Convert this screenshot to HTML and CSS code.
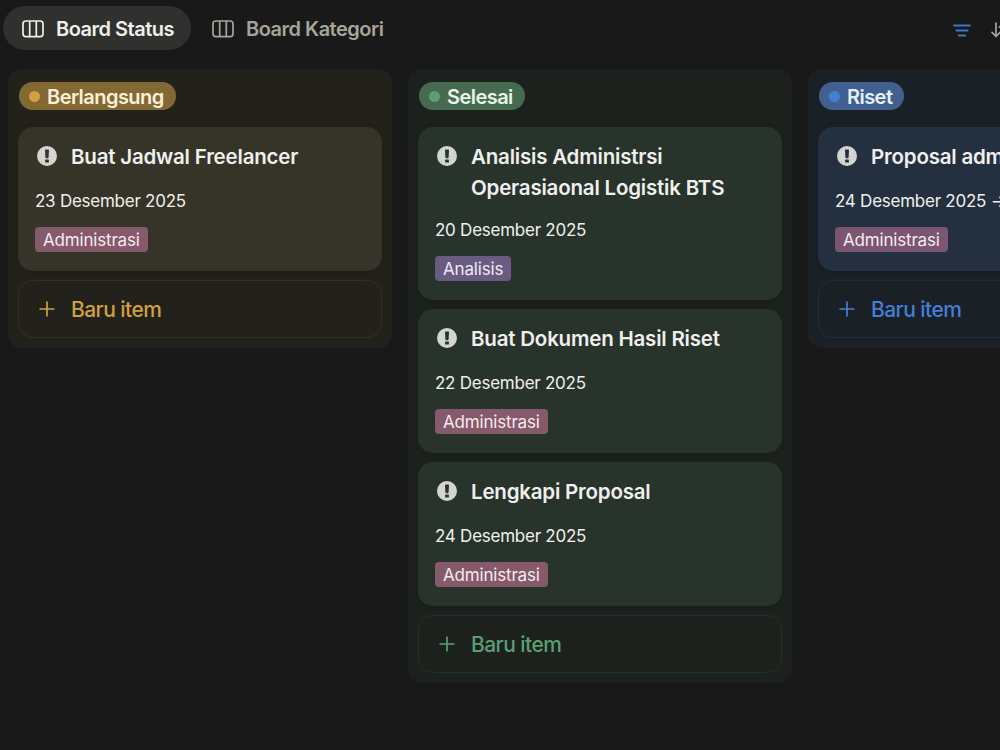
FILE: index.html
```html
<!DOCTYPE html>
<html lang="id">
<head>
  <meta charset="UTF-8">
  <meta name="viewport" content="width=device-width, initial-scale=1.0">
  <title>Board Status</title>
  <link rel="stylesheet" href="styles.css">
</head>
<body>
  <!-- Shared icons -->
  <svg class="sprite" aria-hidden="true">
    <symbol id="icon-board" viewBox="0 0 22 18">
      <rect x="1" y="1" width="20" height="15.6" rx="2.8" fill="none" stroke="currentColor" stroke-width="1.7"/>
      <path d="M7.7 1v15.6M14.3 1v15.6" fill="none" stroke="currentColor" stroke-width="1.7"/>
    </symbol>
    <symbol id="icon-alert" viewBox="0 0 20 20">
      <path fill="currentColor" fill-rule="evenodd" d="M10 0a10 10 0 1 0 0 20a10 10 0 0 0 0-20zM8.8 3.4h2.4q.9 0 .8.9l-.4 7q-.1.9-.9.9H9.300q-.8 0-.9-.9L8 4.300q-.1-.9.8-.9zM8.600 13.600h2.800q.5 0 .5.5v1.900q0 .5-.5.5h-2.800q-.5 0-.5-.5v-1.900q0-.5.5-.5z"/>
    </symbol>
    <symbol id="icon-plus" viewBox="0 0 16 16">
      <path d="M8 1.200v13.600M1.200 8h13.600" fill="none" stroke="currentColor" stroke-width="1.700" stroke-linecap="round"/>
    </symbol>
  </svg>

  <header class="topbar">
    <nav class="tabs">
      <a class="tab active"><svg class="tab-icon"><use href="#icon-board"/></svg>Board Status</a>
      <a class="tab"><svg class="tab-icon"><use href="#icon-board"/></svg>Board Kategori</a>
    </nav>
    <div class="actions">
      <svg class="filter-icon" viewBox="0 0 18 13"><path d="M1.200 1.500h15.600M3.600 6.500h10.800M6 11.500h6" fill="none" stroke="currentColor" stroke-width="2.200" stroke-linecap="round"/></svg>
      <svg class="sort-icon" viewBox="0 0 20 16"><path d="M5 1v13.500M1 10.300l4 4.200 4-4.200M13 14.500V1M8.500 5.200L13 1l4.500 4.200" fill="none" stroke="currentColor" stroke-width="1.700" stroke-linecap="round" stroke-linejoin="round"/></svg>
    </div>
  </header>

  <main class="board">
    <section class="column yellow">
      <h2 class="status">Berlangsung</h2>
      <article class="card">
        <div class="card-title"><svg class="card-icon"><use href="#icon-alert"/></svg><h3>Buat Jadwal Freelancer</h3></div>
        <p class="date">23 Desember 2025</p>
        <span class="tag pink">Administrasi</span>
      </article>
      <button class="new-item"><svg class="plus"><use href="#icon-plus"/></svg>Baru item</button>
    </section>

    <section class="column green">
      <h2 class="status">Selesai</h2>
      <article class="card">
        <div class="card-title"><svg class="card-icon"><use href="#icon-alert"/></svg><h3>Analisis Administrsi Operasiaonal Logistik BTS</h3></div>
        <p class="date">20 Desember 2025</p>
        <span class="tag purple">Analisis</span>
      </article>
      <article class="card">
        <div class="card-title"><svg class="card-icon"><use href="#icon-alert"/></svg><h3>Buat Dokumen Hasil Riset</h3></div>
        <p class="date">22 Desember 2025</p>
        <span class="tag pink">Administrasi</span>
      </article>
      <article class="card">
        <div class="card-title"><svg class="card-icon"><use href="#icon-alert"/></svg><h3>Lengkapi Proposal</h3></div>
        <p class="date">24 Desember 2025</p>
        <span class="tag pink">Administrasi</span>
      </article>
      <button class="new-item"><svg class="plus"><use href="#icon-plus"/></svg>Baru item</button>
    </section>

    <section class="column blue">
      <h2 class="status">Riset</h2>
      <article class="card">
        <div class="card-title"><svg class="card-icon"><use href="#icon-alert"/></svg><h3>Proposal adm</h3></div>
        <p class="date">24 Desember 2025 →</p>
        <span class="tag pink">Administrasi</span>
      </article>
      <button class="new-item"><svg class="plus"><use href="#icon-plus"/></svg>Baru item</button>
    </section>
  </main>
</body>
</html>
```
FILE: styles.css
```css
:root {
  --bg: #191919;
  --text: #f0efed;
}

* {
  box-sizing: border-box;
  margin: 0;
  padding: 0;
}

body {
  width: 1000px;
  height: 750px;
  overflow: hidden;
  background: var(--bg);
  color: var(--text);
  font-family: Inter, sans-serif;
}

.sprite {
  display: none;
}

.topbar {
  display: flex;
  align-items: center;
  justify-content: space-between;
  height: 69px;
  padding: 0 0 13px 3px;
}

.tabs {
  display: flex;
  gap: 2px;
}

.tab {
  display: flex;
  align-items: center;
  gap: 12px;
  height: 44px;
  padding: 1px 17px 0 19px;
  border-radius: 22px;
  font-size: 20px;
  font-weight: 600;
  letter-spacing: -0.5px;
  color: #a8a49c;
}

.tab.active {
  background: #30302e;
  color: var(--text);
}

.tab-icon {
  width: 22px;
  height: 18px;
}

.actions {
  display: flex;
  align-items: center;
  flex: none;
  gap: 20px;
  margin-right: -11px;
  padding-top: 4px;
}

.filter-icon {
  width: 18px;
  height: 13px;
  color: #3f78cc;
}

.sort-icon {
  width: 20px;
  height: 16px;
  color: #a8a49c;
}

.board {
  display: flex;
  align-items: flex-start;
  gap: 16px;
  padding-left: 8px;
}

.column {
  display: flex;
  flex-direction: column;
  flex: none;
  gap: 9px;
  width: 384px;
  padding: 13px 10px 10px;
  border-radius: 14px;
  background: var(--column);
}

.yellow {
  --column: #23211c;
  --card: #363328;
  --line: #35301f;
  --pill: #836833;
  --pill-text: #faf0d8;
  --accent: #d0a043;
}

.green {
  --column: #1d211e;
  --card: #27332b;
  --line: #24312a;
  --pill: #466b50;
  --pill-text: #e8f3ea;
  --accent: #5b9f75;
}

.blue {
  --column: #1b2027;
  --card: #242f3f;
  --line: #202d40;
  --pill: #40618f;
  --pill-text: #e6f0fb;
  --accent: #447fd6;
}

.status {
  display: flex;
  align-items: center;
  align-self: flex-start;
  gap: 7px;
  height: 28px;
  margin: 0 0 8px 1px;
  padding: 1px 12px 0 10px;
  border-radius: 14px;
  background: var(--pill);
  color: var(--pill-text);
  font-size: 20px;
  font-weight: 600;
  letter-spacing: -0.55px;
}

.status::before {
  content: "";
  width: 11px;
  height: 11px;
  border-radius: 50%;
  background: var(--accent);
}

.card {
  padding: 13px 17px 19px;
  border-radius: 15px;
  background: var(--card);
  box-shadow: 0 2px 6px rgba(0, 0, 0, 0.15);
}

.card-title {
  display: flex;
  gap: 14px;
  min-height: 33px;
  padding-left: 2px;
}

.card-icon {
  flex: none;
  width: 20px;
  height: 20px;
  margin-top: 6px;
  color: #d4d4d3;
}

.card-title h3 {
  padding-top: 1px;
  margin-bottom: -1px;
  font-size: 20.5px;
  font-weight: 600;
  line-height: 31px;
  letter-spacing: -0.2px;
}

.date {
  margin: 17px 0 15px;
  font-size: 17px;
  line-height: 22px;
  letter-spacing: -0.25px;
  white-space: nowrap;
}

.tag {
  display: block;
  width: fit-content;
  height: 25px;
  padding: 0 8px;
  border-radius: 4px;
  font-size: 17px;
  line-height: 26px;
  letter-spacing: -0.18px;
}

.pink {
  background: #855a6b;
  color: #f9e9f1;
}

.blue .pink {
  background: #7b5673;
}

.purple {
  background: #695c80;
  color: #f0eaf9;
}

.new-item {
  display: flex;
  align-items: center;
  gap: 16px;
  height: 58px;
  padding: 0 20px;
  border: 1px solid var(--line);
  border-radius: 15px;
  background: none;
  color: var(--accent);
  font: 500 21px Inter, sans-serif;
  letter-spacing: -0.55px;
}

.plus {
  width: 16px;
  height: 16px;
}
```
